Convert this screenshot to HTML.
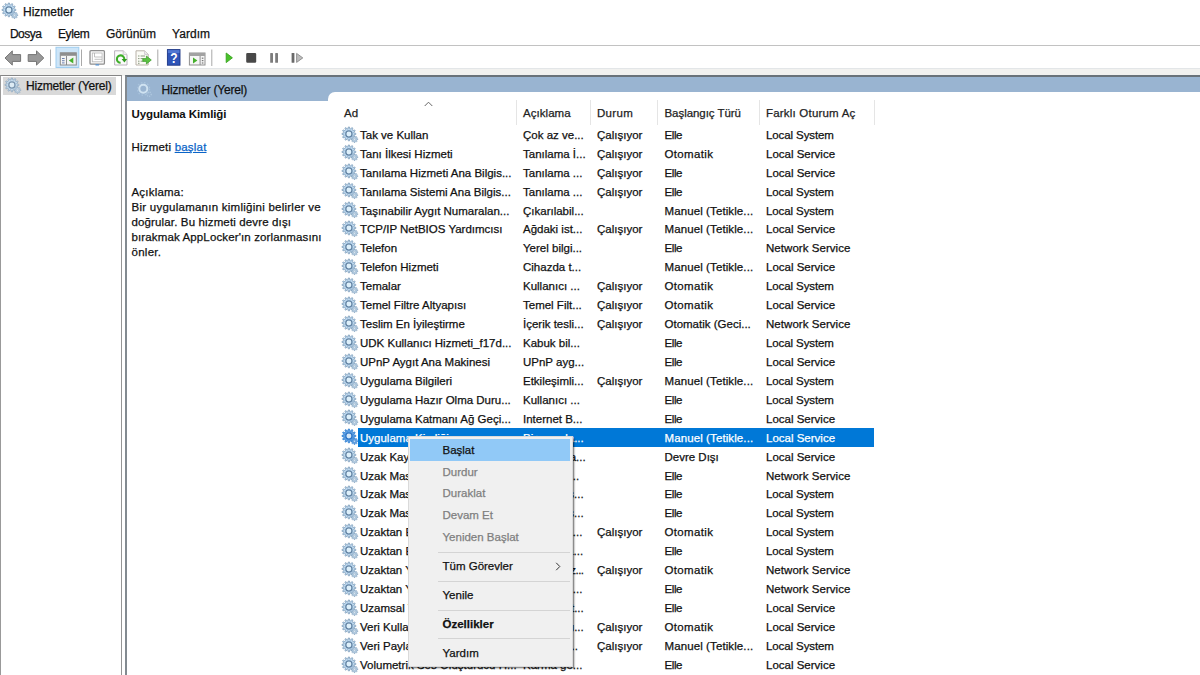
<!DOCTYPE html>
<html lang="tr"><head><meta charset="utf-8"><title>Hizmetler</title>
<style>
*{box-sizing:border-box;margin:0;padding:0}
html,body{width:1200px;height:675px;overflow:hidden;background:#fff}
body{position:relative;font-family:"Liberation Sans",Arial,sans-serif;font-size:11.5px;color:#111;letter-spacing:0;line-height:14px;-webkit-text-stroke:0.25px}
.a{position:absolute;white-space:nowrap}
.gear{position:absolute;overflow:visible}
.t{position:absolute;white-space:nowrap;height:14px;line-height:14px}
.sel{color:#fff}
.hd{color:#222}
.mi{position:absolute;left:442.5px;white-space:nowrap;height:14px;line-height:14px;font-size:11.5px;color:#111}
.dis{color:#7f7f7f}
.sep{position:absolute;left:438px;width:132px;height:1px;background:#d4d4d4}
.tsep{position:absolute;top:49px;width:1px;height:17px;background:#a8a8a8}
</style></head><body>

<svg class="gear" style="left:1.2px;top:2.90px;" width="18" height="17" viewBox="0 0 18 17"><path d="M7.1,1.7 7.3,-0.0 8.5,-0.0 8.7,1.7 9.8,2.0 10.8,0.6 11.9,1.2 11.2,2.8 12.0,3.6 13.6,2.9 14.2,4.0 12.8,5.0 13.1,6.1 14.8,6.3 14.8,7.5 13.1,7.7 12.8,8.8 14.2,9.8 13.6,10.9 12.0,10.2 11.2,11.0 11.9,12.6 10.8,13.2 9.8,11.8 8.7,12.1 8.5,13.8 7.3,13.8 7.1,12.1 6.0,11.8 5.0,13.2 3.9,12.6 4.6,11.0 3.8,10.2 2.2,10.9 1.6,9.8 3.0,8.8 2.7,7.7 1.0,7.5 1.0,6.3 2.7,6.1 3.0,5.0 1.6,4.0 2.2,2.9 3.8,3.6 4.6,2.8 3.9,1.2 5.0,0.6 6.0,2.0Z" fill="#bdd9f0" stroke="#829fbb" stroke-width="0.8" stroke-linejoin="round"/><circle cx="7.9" cy="6.9" r="3.1" fill="#def0fb" stroke="#6283a3" stroke-width="1.25"/><path d="M13.0,10.0 13.1,8.9 13.9,8.9 14.0,10.0 14.7,10.2 15.5,9.6 16.1,10.2 15.5,11.0 15.7,11.7 16.8,11.8 16.8,12.6 15.7,12.7 15.5,13.4 16.1,14.2 15.5,14.8 14.7,14.2 14.0,14.4 13.9,15.5 13.1,15.5 13.0,14.4 12.3,14.2 11.5,14.8 10.9,14.2 11.5,13.4 11.3,12.7 10.2,12.6 10.2,11.8 11.3,11.7 11.5,11.0 10.9,10.2 11.5,9.6 12.3,10.2Z" fill="#c3d9ec" stroke="#809fbb" stroke-width="0.7" stroke-linejoin="round"/><circle cx="13.5" cy="12.2" r="1" fill="#f0f7fc" stroke="#809fbb" stroke-width="0.5"/></svg>
<div class="t" style="left:23px;top:5px;font-size:12px">Hizmetler</div>
<div class="t" style="left:10px;top:27px;font-size:12px;letter-spacing:-0.55px">Dosya</div>
<div class="t" style="left:58px;top:27px;font-size:12px;letter-spacing:-0.4px">Eylem</div>
<div class="t" style="left:106px;top:27px;font-size:12px;letter-spacing:0px">Görünüm</div>
<div class="t" style="left:172px;top:27px;font-size:12px;letter-spacing:0.05px">Yardım</div>
<div class="a" style="left:0;top:44.7px;width:1200px;height:1px;background:#c2c2c2"></div>
<div class="a" style="left:0;top:67.5px;width:1200px;height:8px;background:#f1f1ef"></div>
<div class="a" style="left:0;top:67.5px;width:1200px;height:1px;background:#e3e6e8"></div>

<svg class="a" style="left:0;top:46px" width="320" height="22" viewBox="0 46 320 22">
 <!-- back / forward -->
 <path d="M5,58 L12.3,50.9 V54.6 H20.6 V61.4 H12.3 V65.1 Z" fill="#999999" stroke="#757575" stroke-width="1" stroke-linejoin="round"/>
 <path d="M43.8,58 L36.5,50.9 V54.6 H28.2 V61.4 H36.5 V65.1 Z" fill="#999999" stroke="#757575" stroke-width="1" stroke-linejoin="round"/>
 <rect x="50" y="49.5" width="1" height="16.5" fill="#a9a9a9"/>
 <!-- selected button -->
 <rect x="56" y="47.3" width="22.8" height="20.2" fill="#cde5f8" stroke="#9fcdf0" stroke-width="1"/>
 <rect x="60.3" y="52.8" width="16" height="12.2" fill="#f4f4f4" stroke="#8b8b8b" stroke-width="1"/>
 <rect x="60.3" y="52.8" width="16" height="3" fill="#8e8e8e"/>
 <rect x="66" y="56" width="1" height="9" fill="#8b8b8b"/>
 <rect x="62" y="58" width="2.6" height="1" fill="#6b7fb0"/><rect x="62" y="60.2" width="2.6" height="1" fill="#6b7fb0"/><rect x="62" y="62.4" width="2.6" height="1" fill="#6b7fb0"/>
 <path d="M73.3,57.6 V63.6 L68.8,60.6 Z" fill="#46b02c"/>
 <rect x="81" y="49.5" width="1" height="16.5" fill="#a9a9a9"/>
 <!-- icon 2 -->
 <rect x="90" y="50.6" width="14.4" height="13.6" rx="1" fill="#fafafa" stroke="#8e8e8e" stroke-width="1.3"/>
 <rect x="92.3" y="53" width="9.8" height="8.8" fill="#fff" stroke="#b5b5b5" stroke-width="0.8"/>
 <path d="M94.5,53 V57 H102 M94.5,59.3 H102" stroke="#b0b0b0" stroke-width="0.8" fill="none"/>
 <rect x="95.5" y="64.3" width="3.6" height="1.2" fill="#4d8fd6"/>
 <!-- icon 3 refresh -->
 <path d="M114.6,50.8 H123.2 L127,54.6 V65 H114.6 Z" fill="#fbfbfb" stroke="#b9b2bd" stroke-width="1" stroke-linejoin="round"/>
 <path d="M123.2,50.8 V54.6 H127" fill="#eee" stroke="#c5bfc8" stroke-width="0.8"/>
 <path d="M124.3,59 A3.7,3.7 0 1 0 120.6,62.8" fill="none" stroke="#3fae2a" stroke-width="2.1"/>
 <path d="M121.6,59 H127.2 L124.4,62.6 Z" fill="#2f9a1e"/>
 <!-- icon 4 export -->
 <path d="M136,50.8 H144.6 L148.2,54.4 V65 H136 Z" fill="#fbfbf6" stroke="#b9b2a8" stroke-width="1" stroke-linejoin="round"/>
 <path d="M144.6,50.8 V54.4 H148.2" fill="#eee" stroke="#c9c0cc" stroke-width="0.8"/>
 <path d="M138,56 H139.5 M140.6,56 H145 M138,58.6 H139.5 M140.6,58.6 H143 M138,61.2 H139.5 M140.6,61.2 H143 M138,63.3 H139.5" stroke="#8a9a80" stroke-width="1"/>
 <path d="M142.8,58.6 H146.4 V56 L151.3,60 L146.4,64 V61.4 H142.8 Z" fill="#5cc243" stroke="#3a9a26" stroke-width="0.7" stroke-linejoin="round"/>
 <rect x="157.3" y="49.5" width="1" height="16.5" fill="#a9a9a9"/>
 <!-- help -->
 <rect x="167.4" y="49.6" width="12.6" height="15.6" fill="#2f55b8" stroke="#1c3585" stroke-width="0.9"/>
 <path d="M167.9,50.1 H179.5 V53 H167.9Z" fill="#5f86dd" opacity=".7"/>
 <text transform="translate(173.8,63.2) scale(0.8,1)" font-family="Liberation Sans, Arial, sans-serif" font-size="15" font-weight="bold" fill="#ffffff" text-anchor="middle">?</text>
 <!-- window play -->
 <rect x="189.4" y="53" width="15.6" height="12" fill="#f6f6f6" stroke="#909090" stroke-width="1"/>
 <rect x="189.4" y="53" width="15.6" height="3" fill="#a2a2a2"/>
 <rect x="199.6" y="56" width="1" height="9" fill="#909090"/>
 <path d="M193,57.4 V63.4 L197.4,60.4 Z" fill="#46b02c"/>
 <rect x="201.8" y="57.6" width="1.6" height="1.2" fill="#777"/><rect x="201.8" y="60" width="1.6" height="1.2" fill="#777"/><rect x="201.8" y="62.4" width="1.6" height="1.2" fill="#777"/>
 <rect x="211.3" y="49.5" width="1" height="16.5" fill="#a9a9a9"/>
 <!-- play stop pause restart -->
 <path d="M226.2,53 L232.4,57.8 L226.2,62.6 Z" fill="#49c22a" stroke="#37a41d" stroke-width="0.9" stroke-linejoin="round"/>
 <rect x="246.2" y="52.9" width="10" height="9.8" rx="1.2" fill="#484848"/>
 <rect x="270.2" y="53" width="2.8" height="9.8" rx=".6" fill="#7c7c7c"/><rect x="275.2" y="53" width="2.8" height="9.8" rx=".6" fill="#7c7c7c"/>
 <rect x="291.6" y="53" width="2.8" height="9.8" rx=".6" fill="#6a6a6a"/>
 <path d="M296.6,53.4 L302.8,57.9 L296.6,62.4 Z" fill="#bdbdbd" stroke="#8a8a8a" stroke-width="0.9" stroke-linejoin="round"/>
</svg>

<div class="a" style="left:0;top:74.7px;width:122px;height:601px;border:1px solid #959595;border-top:1.4px solid #858585;border-bottom:0;border-left:1px solid #999;background:#fff"></div>
<div class="a" style="left:3px;top:77px;width:113px;height:18px;background:#d9d9d9"></div>
<svg class="gear" style="left:4px;top:77.50px;opacity:.8" width="18" height="17" viewBox="0 0 18 17"><path d="M7.1,1.7 7.3,-0.0 8.5,-0.0 8.7,1.7 9.8,2.0 10.8,0.6 11.9,1.2 11.2,2.8 12.0,3.6 13.6,2.9 14.2,4.0 12.8,5.0 13.1,6.1 14.8,6.3 14.8,7.5 13.1,7.7 12.8,8.8 14.2,9.8 13.6,10.9 12.0,10.2 11.2,11.0 11.9,12.6 10.8,13.2 9.8,11.8 8.7,12.1 8.5,13.8 7.3,13.8 7.1,12.1 6.0,11.8 5.0,13.2 3.9,12.6 4.6,11.0 3.8,10.2 2.2,10.9 1.6,9.8 3.0,8.8 2.7,7.7 1.0,7.5 1.0,6.3 2.7,6.1 3.0,5.0 1.6,4.0 2.2,2.9 3.8,3.6 4.6,2.8 3.9,1.2 5.0,0.6 6.0,2.0Z" fill="#bdd9f0" stroke="#829fbb" stroke-width="0.8" stroke-linejoin="round"/><circle cx="7.9" cy="6.9" r="3.1" fill="#def0fb" stroke="#6283a3" stroke-width="1.25"/><path d="M13.0,10.0 13.1,8.9 13.9,8.9 14.0,10.0 14.7,10.2 15.5,9.6 16.1,10.2 15.5,11.0 15.7,11.7 16.8,11.8 16.8,12.6 15.7,12.7 15.5,13.4 16.1,14.2 15.5,14.8 14.7,14.2 14.0,14.4 13.9,15.5 13.1,15.5 13.0,14.4 12.3,14.2 11.5,14.8 10.9,14.2 11.5,13.4 11.3,12.7 10.2,12.6 10.2,11.8 11.3,11.7 11.5,11.0 10.9,10.2 11.5,9.6 12.3,10.2Z" fill="#c3d9ec" stroke="#809fbb" stroke-width="0.7" stroke-linejoin="round"/><circle cx="13.5" cy="12.2" r="1" fill="#f0f7fc" stroke="#809fbb" stroke-width="0.5"/></svg>
<div class="t" style="left:26px;top:78.5px;font-size:12px;letter-spacing:-0.2px">Hizmetler (Yerel)</div>
<div class="a" style="left:125px;top:74.8px;width:1080px;height:601px;border-left:2px solid #838a90;border-top:2.2px solid #69727a;background:#fff"></div>
<div class="a" style="left:127px;top:77px;width:1074px;height:23.5px;background:#99b4d1"></div>
<div class="a" style="left:328px;top:91.8px;width:880px;height:12px;background:#fff;border-top-left-radius:7px"></div>
<svg class="a" style="left:137px;top:82px" width="16" height="16" viewBox="0 0 16 16"><circle cx="6.3" cy="6.8" r="4" fill="none" stroke="#cfe2f1" stroke-width="2"/><circle cx="6.3" cy="6.8" r="6.3" fill="none" stroke="#a9c3dc" stroke-width="1.2" stroke-dasharray="1.6 1.7"/><circle cx="12" cy="12.2" r="2.2" fill="none" stroke="#b4cce2" stroke-width="1.1" stroke-dasharray="1 1"/></svg>
<div class="t" style="left:161.5px;top:83.2px;font-size:12px;letter-spacing:-0.2px">Hizmetler (Yerel)</div>
<div class="t" style="left:131.5px;top:106.8px;font-weight:bold;font-size:11.5px;letter-spacing:-0.1px;-webkit-text-stroke:0">Uygulama Kimliği</div>
<div class="t" style="left:131.5px;top:140px;letter-spacing:0.2px">Hizmeti <span style="color:#0a64c8;text-decoration:underline">başlat</span></div>
<div class="t" style="left:131.5px;top:185px;letter-spacing:0.2px">Açıklama:</div>
<div class="t" style="left:131.5px;top:199.70px;letter-spacing:0.25px">Bir uygulamanın kimliğini belirler ve</div>
<div class="t" style="left:131.5px;top:214.65px;letter-spacing:0.14px">doğrular. Bu hizmeti devre dışı</div>
<div class="t" style="left:131.5px;top:229.60px;letter-spacing:0.13px">bırakmak AppLocker'ın zorlanmasını</div>
<div class="t" style="left:131.5px;top:244.55px;letter-spacing:0.27px">önler.</div>
<div class="t hd" style="left:344px;top:105.9px;letter-spacing:0px">Ad</div>
<div class="t hd" style="left:523px;top:105.9px;letter-spacing:0.05px">Açıklama</div>
<div class="t hd" style="left:597px;top:105.9px;letter-spacing:0.3px">Durum</div>
<div class="t hd" style="left:664.5px;top:105.9px;letter-spacing:-0.05px">Başlangıç Türü</div>
<div class="t hd" style="left:766px;top:105.9px;letter-spacing:0.2px">Farklı Oturum Aç</div>
<div class="a" style="left:516px;top:100px;width:1px;height:25px;background:#e5e5e5"></div>
<div class="a" style="left:590px;top:100px;width:1px;height:25px;background:#e5e5e5"></div>
<div class="a" style="left:657px;top:100px;width:1px;height:25px;background:#e5e5e5"></div>
<div class="a" style="left:758.5px;top:100px;width:1px;height:25px;background:#e5e5e5"></div>
<div class="a" style="left:873.5px;top:100px;width:1px;height:25px;background:#e5e5e5"></div>
<svg class="a" style="left:423.5px;top:100.5px" width="9" height="6" viewBox="0 0 9 6"><path d="M0.7,5 L4.5,1.2 L8.3,5" fill="none" stroke="#666" stroke-width="1"/></svg>
<div class="a" style="left:358px;top:428.33px;width:516.3px;height:18.5px;background:#0078d7"></div>
<svg class="gear" style="left:340.5px;top:126.50px;" width="18" height="17" viewBox="0 0 18 17"><path d="M7.1,1.7 7.3,-0.0 8.5,-0.0 8.7,1.7 9.8,2.0 10.8,0.6 11.9,1.2 11.2,2.8 12.0,3.6 13.6,2.9 14.2,4.0 12.8,5.0 13.1,6.1 14.8,6.3 14.8,7.5 13.1,7.7 12.8,8.8 14.2,9.8 13.6,10.9 12.0,10.2 11.2,11.0 11.9,12.6 10.8,13.2 9.8,11.8 8.7,12.1 8.5,13.8 7.3,13.8 7.1,12.1 6.0,11.8 5.0,13.2 3.9,12.6 4.6,11.0 3.8,10.2 2.2,10.9 1.6,9.8 3.0,8.8 2.7,7.7 1.0,7.5 1.0,6.3 2.7,6.1 3.0,5.0 1.6,4.0 2.2,2.9 3.8,3.6 4.6,2.8 3.9,1.2 5.0,0.6 6.0,2.0Z" fill="#bdd9f0" stroke="#829fbb" stroke-width="0.8" stroke-linejoin="round"/><circle cx="7.9" cy="6.9" r="3.1" fill="#def0fb" stroke="#6283a3" stroke-width="1.25"/><path d="M13.0,10.0 13.1,8.9 13.9,8.9 14.0,10.0 14.7,10.2 15.5,9.6 16.1,10.2 15.5,11.0 15.7,11.7 16.8,11.8 16.8,12.6 15.7,12.7 15.5,13.4 16.1,14.2 15.5,14.8 14.7,14.2 14.0,14.4 13.9,15.5 13.1,15.5 13.0,14.4 12.3,14.2 11.5,14.8 10.9,14.2 11.5,13.4 11.3,12.7 10.2,12.6 10.2,11.8 11.3,11.7 11.5,11.0 10.9,10.2 11.5,9.6 12.3,10.2Z" fill="#c3d9ec" stroke="#809fbb" stroke-width="0.7" stroke-linejoin="round"/><circle cx="13.5" cy="12.2" r="1" fill="#f0f7fc" stroke="#809fbb" stroke-width="0.5"/></svg>
<div class="t" style="left:360px;top:127.80px">Tak ve Kullan</div>
<div class="t" style="left:523px;top:127.80px">Çok az ve...</div>
<div class="t" style="left:597px;top:127.80px">Çalışıyor</div>
<div class="t" style="left:664.5px;top:127.80px;letter-spacing:-0.4px">Elle</div>
<div class="t" style="left:766px;top:127.80px;letter-spacing:-0.1px">Local System</div>
<svg class="gear" style="left:340.5px;top:145.43px;" width="18" height="17" viewBox="0 0 18 17"><path d="M7.1,1.7 7.3,-0.0 8.5,-0.0 8.7,1.7 9.8,2.0 10.8,0.6 11.9,1.2 11.2,2.8 12.0,3.6 13.6,2.9 14.2,4.0 12.8,5.0 13.1,6.1 14.8,6.3 14.8,7.5 13.1,7.7 12.8,8.8 14.2,9.8 13.6,10.9 12.0,10.2 11.2,11.0 11.9,12.6 10.8,13.2 9.8,11.8 8.7,12.1 8.5,13.8 7.3,13.8 7.1,12.1 6.0,11.8 5.0,13.2 3.9,12.6 4.6,11.0 3.8,10.2 2.2,10.9 1.6,9.8 3.0,8.8 2.7,7.7 1.0,7.5 1.0,6.3 2.7,6.1 3.0,5.0 1.6,4.0 2.2,2.9 3.8,3.6 4.6,2.8 3.9,1.2 5.0,0.6 6.0,2.0Z" fill="#bdd9f0" stroke="#829fbb" stroke-width="0.8" stroke-linejoin="round"/><circle cx="7.9" cy="6.9" r="3.1" fill="#def0fb" stroke="#6283a3" stroke-width="1.25"/><path d="M13.0,10.0 13.1,8.9 13.9,8.9 14.0,10.0 14.7,10.2 15.5,9.6 16.1,10.2 15.5,11.0 15.7,11.7 16.8,11.8 16.8,12.6 15.7,12.7 15.5,13.4 16.1,14.2 15.5,14.8 14.7,14.2 14.0,14.4 13.9,15.5 13.1,15.5 13.0,14.4 12.3,14.2 11.5,14.8 10.9,14.2 11.5,13.4 11.3,12.7 10.2,12.6 10.2,11.8 11.3,11.7 11.5,11.0 10.9,10.2 11.5,9.6 12.3,10.2Z" fill="#c3d9ec" stroke="#809fbb" stroke-width="0.7" stroke-linejoin="round"/><circle cx="13.5" cy="12.2" r="1" fill="#f0f7fc" stroke="#809fbb" stroke-width="0.5"/></svg>
<div class="t" style="left:360px;top:146.73px">Tanı İlkesi Hizmeti</div>
<div class="t" style="left:523px;top:146.73px">Tanılama İ...</div>
<div class="t" style="left:597px;top:146.73px">Çalışıyor</div>
<div class="t" style="left:664.5px;top:146.73px;letter-spacing:0.35px">Otomatik</div>
<div class="t" style="left:766px;top:146.73px">Local Service</div>
<svg class="gear" style="left:340.5px;top:164.36px;" width="18" height="17" viewBox="0 0 18 17"><path d="M7.1,1.7 7.3,-0.0 8.5,-0.0 8.7,1.7 9.8,2.0 10.8,0.6 11.9,1.2 11.2,2.8 12.0,3.6 13.6,2.9 14.2,4.0 12.8,5.0 13.1,6.1 14.8,6.3 14.8,7.5 13.1,7.7 12.8,8.8 14.2,9.8 13.6,10.9 12.0,10.2 11.2,11.0 11.9,12.6 10.8,13.2 9.8,11.8 8.7,12.1 8.5,13.8 7.3,13.8 7.1,12.1 6.0,11.8 5.0,13.2 3.9,12.6 4.6,11.0 3.8,10.2 2.2,10.9 1.6,9.8 3.0,8.8 2.7,7.7 1.0,7.5 1.0,6.3 2.7,6.1 3.0,5.0 1.6,4.0 2.2,2.9 3.8,3.6 4.6,2.8 3.9,1.2 5.0,0.6 6.0,2.0Z" fill="#bdd9f0" stroke="#829fbb" stroke-width="0.8" stroke-linejoin="round"/><circle cx="7.9" cy="6.9" r="3.1" fill="#def0fb" stroke="#6283a3" stroke-width="1.25"/><path d="M13.0,10.0 13.1,8.9 13.9,8.9 14.0,10.0 14.7,10.2 15.5,9.6 16.1,10.2 15.5,11.0 15.7,11.7 16.8,11.8 16.8,12.6 15.7,12.7 15.5,13.4 16.1,14.2 15.5,14.8 14.7,14.2 14.0,14.4 13.9,15.5 13.1,15.5 13.0,14.4 12.3,14.2 11.5,14.8 10.9,14.2 11.5,13.4 11.3,12.7 10.2,12.6 10.2,11.8 11.3,11.7 11.5,11.0 10.9,10.2 11.5,9.6 12.3,10.2Z" fill="#c3d9ec" stroke="#809fbb" stroke-width="0.7" stroke-linejoin="round"/><circle cx="13.5" cy="12.2" r="1" fill="#f0f7fc" stroke="#809fbb" stroke-width="0.5"/></svg>
<div class="t" style="left:360px;top:165.66px">Tanılama Hizmeti Ana Bilgis...</div>
<div class="t" style="left:523px;top:165.66px">Tanılama ...</div>
<div class="t" style="left:597px;top:165.66px">Çalışıyor</div>
<div class="t" style="left:664.5px;top:165.66px;letter-spacing:-0.4px">Elle</div>
<div class="t" style="left:766px;top:165.66px">Local Service</div>
<svg class="gear" style="left:340.5px;top:183.29px;" width="18" height="17" viewBox="0 0 18 17"><path d="M7.1,1.7 7.3,-0.0 8.5,-0.0 8.7,1.7 9.8,2.0 10.8,0.6 11.9,1.2 11.2,2.8 12.0,3.6 13.6,2.9 14.2,4.0 12.8,5.0 13.1,6.1 14.8,6.3 14.8,7.5 13.1,7.7 12.8,8.8 14.2,9.8 13.6,10.9 12.0,10.2 11.2,11.0 11.9,12.6 10.8,13.2 9.8,11.8 8.7,12.1 8.5,13.8 7.3,13.8 7.1,12.1 6.0,11.8 5.0,13.2 3.9,12.6 4.6,11.0 3.8,10.2 2.2,10.9 1.6,9.8 3.0,8.8 2.7,7.7 1.0,7.5 1.0,6.3 2.7,6.1 3.0,5.0 1.6,4.0 2.2,2.9 3.8,3.6 4.6,2.8 3.9,1.2 5.0,0.6 6.0,2.0Z" fill="#bdd9f0" stroke="#829fbb" stroke-width="0.8" stroke-linejoin="round"/><circle cx="7.9" cy="6.9" r="3.1" fill="#def0fb" stroke="#6283a3" stroke-width="1.25"/><path d="M13.0,10.0 13.1,8.9 13.9,8.9 14.0,10.0 14.7,10.2 15.5,9.6 16.1,10.2 15.5,11.0 15.7,11.7 16.8,11.8 16.8,12.6 15.7,12.7 15.5,13.4 16.1,14.2 15.5,14.8 14.7,14.2 14.0,14.4 13.9,15.5 13.1,15.5 13.0,14.4 12.3,14.2 11.5,14.8 10.9,14.2 11.5,13.4 11.3,12.7 10.2,12.6 10.2,11.8 11.3,11.7 11.5,11.0 10.9,10.2 11.5,9.6 12.3,10.2Z" fill="#c3d9ec" stroke="#809fbb" stroke-width="0.7" stroke-linejoin="round"/><circle cx="13.5" cy="12.2" r="1" fill="#f0f7fc" stroke="#809fbb" stroke-width="0.5"/></svg>
<div class="t" style="left:360px;top:184.59px">Tanılama Sistemi Ana Bilgis...</div>
<div class="t" style="left:523px;top:184.59px">Tanılama ...</div>
<div class="t" style="left:597px;top:184.59px">Çalışıyor</div>
<div class="t" style="left:664.5px;top:184.59px;letter-spacing:-0.4px">Elle</div>
<div class="t" style="left:766px;top:184.59px;letter-spacing:-0.1px">Local System</div>
<svg class="gear" style="left:340.5px;top:202.22px;" width="18" height="17" viewBox="0 0 18 17"><path d="M7.1,1.7 7.3,-0.0 8.5,-0.0 8.7,1.7 9.8,2.0 10.8,0.6 11.9,1.2 11.2,2.8 12.0,3.6 13.6,2.9 14.2,4.0 12.8,5.0 13.1,6.1 14.8,6.3 14.8,7.5 13.1,7.7 12.8,8.8 14.2,9.8 13.6,10.9 12.0,10.2 11.2,11.0 11.9,12.6 10.8,13.2 9.8,11.8 8.7,12.1 8.5,13.8 7.3,13.8 7.1,12.1 6.0,11.8 5.0,13.2 3.9,12.6 4.6,11.0 3.8,10.2 2.2,10.9 1.6,9.8 3.0,8.8 2.7,7.7 1.0,7.5 1.0,6.3 2.7,6.1 3.0,5.0 1.6,4.0 2.2,2.9 3.8,3.6 4.6,2.8 3.9,1.2 5.0,0.6 6.0,2.0Z" fill="#bdd9f0" stroke="#829fbb" stroke-width="0.8" stroke-linejoin="round"/><circle cx="7.9" cy="6.9" r="3.1" fill="#def0fb" stroke="#6283a3" stroke-width="1.25"/><path d="M13.0,10.0 13.1,8.9 13.9,8.9 14.0,10.0 14.7,10.2 15.5,9.6 16.1,10.2 15.5,11.0 15.7,11.7 16.8,11.8 16.8,12.6 15.7,12.7 15.5,13.4 16.1,14.2 15.5,14.8 14.7,14.2 14.0,14.4 13.9,15.5 13.1,15.5 13.0,14.4 12.3,14.2 11.5,14.8 10.9,14.2 11.5,13.4 11.3,12.7 10.2,12.6 10.2,11.8 11.3,11.7 11.5,11.0 10.9,10.2 11.5,9.6 12.3,10.2Z" fill="#c3d9ec" stroke="#809fbb" stroke-width="0.7" stroke-linejoin="round"/><circle cx="13.5" cy="12.2" r="1" fill="#f0f7fc" stroke="#809fbb" stroke-width="0.5"/></svg>
<div class="t" style="left:360px;top:203.52px">Taşınabilir Aygıt Numaralan...</div>
<div class="t" style="left:523px;top:203.52px">Çıkarılabil...</div>
<div class="t" style="left:664.5px;top:203.52px;letter-spacing:0.1px">Manuel (Tetikle...</div>
<div class="t" style="left:766px;top:203.52px;letter-spacing:-0.1px">Local System</div>
<svg class="gear" style="left:340.5px;top:221.15px;" width="18" height="17" viewBox="0 0 18 17"><path d="M7.1,1.7 7.3,-0.0 8.5,-0.0 8.7,1.7 9.8,2.0 10.8,0.6 11.9,1.2 11.2,2.8 12.0,3.6 13.6,2.9 14.2,4.0 12.8,5.0 13.1,6.1 14.8,6.3 14.8,7.5 13.1,7.7 12.8,8.8 14.2,9.8 13.6,10.9 12.0,10.2 11.2,11.0 11.9,12.6 10.8,13.2 9.8,11.8 8.7,12.1 8.5,13.8 7.3,13.8 7.1,12.1 6.0,11.8 5.0,13.2 3.9,12.6 4.6,11.0 3.8,10.2 2.2,10.9 1.6,9.8 3.0,8.8 2.7,7.7 1.0,7.5 1.0,6.3 2.7,6.1 3.0,5.0 1.6,4.0 2.2,2.9 3.8,3.6 4.6,2.8 3.9,1.2 5.0,0.6 6.0,2.0Z" fill="#bdd9f0" stroke="#829fbb" stroke-width="0.8" stroke-linejoin="round"/><circle cx="7.9" cy="6.9" r="3.1" fill="#def0fb" stroke="#6283a3" stroke-width="1.25"/><path d="M13.0,10.0 13.1,8.9 13.9,8.9 14.0,10.0 14.7,10.2 15.5,9.6 16.1,10.2 15.5,11.0 15.7,11.7 16.8,11.8 16.8,12.6 15.7,12.7 15.5,13.4 16.1,14.2 15.5,14.8 14.7,14.2 14.0,14.4 13.9,15.5 13.1,15.5 13.0,14.4 12.3,14.2 11.5,14.8 10.9,14.2 11.5,13.4 11.3,12.7 10.2,12.6 10.2,11.8 11.3,11.7 11.5,11.0 10.9,10.2 11.5,9.6 12.3,10.2Z" fill="#c3d9ec" stroke="#809fbb" stroke-width="0.7" stroke-linejoin="round"/><circle cx="13.5" cy="12.2" r="1" fill="#f0f7fc" stroke="#809fbb" stroke-width="0.5"/></svg>
<div class="t" style="left:360px;top:222.45px">TCP/IP NetBIOS Yardımcısı</div>
<div class="t" style="left:523px;top:222.45px">Ağdaki ist...</div>
<div class="t" style="left:597px;top:222.45px">Çalışıyor</div>
<div class="t" style="left:664.5px;top:222.45px;letter-spacing:0.1px">Manuel (Tetikle...</div>
<div class="t" style="left:766px;top:222.45px">Local Service</div>
<svg class="gear" style="left:340.5px;top:240.08px;" width="18" height="17" viewBox="0 0 18 17"><path d="M7.1,1.7 7.3,-0.0 8.5,-0.0 8.7,1.7 9.8,2.0 10.8,0.6 11.9,1.2 11.2,2.8 12.0,3.6 13.6,2.9 14.2,4.0 12.8,5.0 13.1,6.1 14.8,6.3 14.8,7.5 13.1,7.7 12.8,8.8 14.2,9.8 13.6,10.9 12.0,10.2 11.2,11.0 11.9,12.6 10.8,13.2 9.8,11.8 8.7,12.1 8.5,13.8 7.3,13.8 7.1,12.1 6.0,11.8 5.0,13.2 3.9,12.6 4.6,11.0 3.8,10.2 2.2,10.9 1.6,9.8 3.0,8.8 2.7,7.7 1.0,7.5 1.0,6.3 2.7,6.1 3.0,5.0 1.6,4.0 2.2,2.9 3.8,3.6 4.6,2.8 3.9,1.2 5.0,0.6 6.0,2.0Z" fill="#bdd9f0" stroke="#829fbb" stroke-width="0.8" stroke-linejoin="round"/><circle cx="7.9" cy="6.9" r="3.1" fill="#def0fb" stroke="#6283a3" stroke-width="1.25"/><path d="M13.0,10.0 13.1,8.9 13.9,8.9 14.0,10.0 14.7,10.2 15.5,9.6 16.1,10.2 15.5,11.0 15.7,11.7 16.8,11.8 16.8,12.6 15.7,12.7 15.5,13.4 16.1,14.2 15.5,14.8 14.7,14.2 14.0,14.4 13.9,15.5 13.1,15.5 13.0,14.4 12.3,14.2 11.5,14.8 10.9,14.2 11.5,13.4 11.3,12.7 10.2,12.6 10.2,11.8 11.3,11.7 11.5,11.0 10.9,10.2 11.5,9.6 12.3,10.2Z" fill="#c3d9ec" stroke="#809fbb" stroke-width="0.7" stroke-linejoin="round"/><circle cx="13.5" cy="12.2" r="1" fill="#f0f7fc" stroke="#809fbb" stroke-width="0.5"/></svg>
<div class="t" style="left:360px;top:241.38px">Telefon</div>
<div class="t" style="left:523px;top:241.38px">Yerel bilgi...</div>
<div class="t" style="left:664.5px;top:241.38px;letter-spacing:-0.4px">Elle</div>
<div class="t" style="left:766px;top:241.38px;letter-spacing:0.05px">Network Service</div>
<svg class="gear" style="left:340.5px;top:259.01px;" width="18" height="17" viewBox="0 0 18 17"><path d="M7.1,1.7 7.3,-0.0 8.5,-0.0 8.7,1.7 9.8,2.0 10.8,0.6 11.9,1.2 11.2,2.8 12.0,3.6 13.6,2.9 14.2,4.0 12.8,5.0 13.1,6.1 14.8,6.3 14.8,7.5 13.1,7.7 12.8,8.8 14.2,9.8 13.6,10.9 12.0,10.2 11.2,11.0 11.9,12.6 10.8,13.2 9.8,11.8 8.7,12.1 8.5,13.8 7.3,13.8 7.1,12.1 6.0,11.8 5.0,13.2 3.9,12.6 4.6,11.0 3.8,10.2 2.2,10.9 1.6,9.8 3.0,8.8 2.7,7.7 1.0,7.5 1.0,6.3 2.7,6.1 3.0,5.0 1.6,4.0 2.2,2.9 3.8,3.6 4.6,2.8 3.9,1.2 5.0,0.6 6.0,2.0Z" fill="#bdd9f0" stroke="#829fbb" stroke-width="0.8" stroke-linejoin="round"/><circle cx="7.9" cy="6.9" r="3.1" fill="#def0fb" stroke="#6283a3" stroke-width="1.25"/><path d="M13.0,10.0 13.1,8.9 13.9,8.9 14.0,10.0 14.7,10.2 15.5,9.6 16.1,10.2 15.5,11.0 15.7,11.7 16.8,11.8 16.8,12.6 15.7,12.7 15.5,13.4 16.1,14.2 15.5,14.8 14.7,14.2 14.0,14.4 13.9,15.5 13.1,15.5 13.0,14.4 12.3,14.2 11.5,14.8 10.9,14.2 11.5,13.4 11.3,12.7 10.2,12.6 10.2,11.8 11.3,11.7 11.5,11.0 10.9,10.2 11.5,9.6 12.3,10.2Z" fill="#c3d9ec" stroke="#809fbb" stroke-width="0.7" stroke-linejoin="round"/><circle cx="13.5" cy="12.2" r="1" fill="#f0f7fc" stroke="#809fbb" stroke-width="0.5"/></svg>
<div class="t" style="left:360px;top:260.31px">Telefon Hizmeti</div>
<div class="t" style="left:523px;top:260.31px">Cihazda t...</div>
<div class="t" style="left:664.5px;top:260.31px;letter-spacing:0.1px">Manuel (Tetikle...</div>
<div class="t" style="left:766px;top:260.31px">Local Service</div>
<svg class="gear" style="left:340.5px;top:277.94px;" width="18" height="17" viewBox="0 0 18 17"><path d="M7.1,1.7 7.3,-0.0 8.5,-0.0 8.7,1.7 9.8,2.0 10.8,0.6 11.9,1.2 11.2,2.8 12.0,3.6 13.6,2.9 14.2,4.0 12.8,5.0 13.1,6.1 14.8,6.3 14.8,7.5 13.1,7.7 12.8,8.8 14.2,9.8 13.6,10.9 12.0,10.2 11.2,11.0 11.9,12.6 10.8,13.2 9.8,11.8 8.7,12.1 8.5,13.8 7.3,13.8 7.1,12.1 6.0,11.8 5.0,13.2 3.9,12.6 4.6,11.0 3.8,10.2 2.2,10.9 1.6,9.8 3.0,8.8 2.7,7.7 1.0,7.5 1.0,6.3 2.7,6.1 3.0,5.0 1.6,4.0 2.2,2.9 3.8,3.6 4.6,2.8 3.9,1.2 5.0,0.6 6.0,2.0Z" fill="#bdd9f0" stroke="#829fbb" stroke-width="0.8" stroke-linejoin="round"/><circle cx="7.9" cy="6.9" r="3.1" fill="#def0fb" stroke="#6283a3" stroke-width="1.25"/><path d="M13.0,10.0 13.1,8.9 13.9,8.9 14.0,10.0 14.7,10.2 15.5,9.6 16.1,10.2 15.5,11.0 15.7,11.7 16.8,11.8 16.8,12.6 15.7,12.7 15.5,13.4 16.1,14.2 15.5,14.8 14.7,14.2 14.0,14.4 13.9,15.5 13.1,15.5 13.0,14.4 12.3,14.2 11.5,14.8 10.9,14.2 11.5,13.4 11.3,12.7 10.2,12.6 10.2,11.8 11.3,11.7 11.5,11.0 10.9,10.2 11.5,9.6 12.3,10.2Z" fill="#c3d9ec" stroke="#809fbb" stroke-width="0.7" stroke-linejoin="round"/><circle cx="13.5" cy="12.2" r="1" fill="#f0f7fc" stroke="#809fbb" stroke-width="0.5"/></svg>
<div class="t" style="left:360px;top:279.24px">Temalar</div>
<div class="t" style="left:523px;top:279.24px">Kullanıcı ...</div>
<div class="t" style="left:597px;top:279.24px">Çalışıyor</div>
<div class="t" style="left:664.5px;top:279.24px;letter-spacing:0.35px">Otomatik</div>
<div class="t" style="left:766px;top:279.24px;letter-spacing:-0.1px">Local System</div>
<svg class="gear" style="left:340.5px;top:296.87px;" width="18" height="17" viewBox="0 0 18 17"><path d="M7.1,1.7 7.3,-0.0 8.5,-0.0 8.7,1.7 9.8,2.0 10.8,0.6 11.9,1.2 11.2,2.8 12.0,3.6 13.6,2.9 14.2,4.0 12.8,5.0 13.1,6.1 14.8,6.3 14.8,7.5 13.1,7.7 12.8,8.8 14.2,9.8 13.6,10.9 12.0,10.2 11.2,11.0 11.9,12.6 10.8,13.2 9.8,11.8 8.7,12.1 8.5,13.8 7.3,13.8 7.1,12.1 6.0,11.8 5.0,13.2 3.9,12.6 4.6,11.0 3.8,10.2 2.2,10.9 1.6,9.8 3.0,8.8 2.7,7.7 1.0,7.5 1.0,6.3 2.7,6.1 3.0,5.0 1.6,4.0 2.2,2.9 3.8,3.6 4.6,2.8 3.9,1.2 5.0,0.6 6.0,2.0Z" fill="#bdd9f0" stroke="#829fbb" stroke-width="0.8" stroke-linejoin="round"/><circle cx="7.9" cy="6.9" r="3.1" fill="#def0fb" stroke="#6283a3" stroke-width="1.25"/><path d="M13.0,10.0 13.1,8.9 13.9,8.9 14.0,10.0 14.7,10.2 15.5,9.6 16.1,10.2 15.5,11.0 15.7,11.7 16.8,11.8 16.8,12.6 15.7,12.7 15.5,13.4 16.1,14.2 15.5,14.8 14.7,14.2 14.0,14.4 13.9,15.5 13.1,15.5 13.0,14.4 12.3,14.2 11.5,14.8 10.9,14.2 11.5,13.4 11.3,12.7 10.2,12.6 10.2,11.8 11.3,11.7 11.5,11.0 10.9,10.2 11.5,9.6 12.3,10.2Z" fill="#c3d9ec" stroke="#809fbb" stroke-width="0.7" stroke-linejoin="round"/><circle cx="13.5" cy="12.2" r="1" fill="#f0f7fc" stroke="#809fbb" stroke-width="0.5"/></svg>
<div class="t" style="left:360px;top:298.17px">Temel Filtre Altyapısı</div>
<div class="t" style="left:523px;top:298.17px">Temel Filt...</div>
<div class="t" style="left:597px;top:298.17px">Çalışıyor</div>
<div class="t" style="left:664.5px;top:298.17px;letter-spacing:0.35px">Otomatik</div>
<div class="t" style="left:766px;top:298.17px">Local Service</div>
<svg class="gear" style="left:340.5px;top:315.80px;" width="18" height="17" viewBox="0 0 18 17"><path d="M7.1,1.7 7.3,-0.0 8.5,-0.0 8.7,1.7 9.8,2.0 10.8,0.6 11.9,1.2 11.2,2.8 12.0,3.6 13.6,2.9 14.2,4.0 12.8,5.0 13.1,6.1 14.8,6.3 14.8,7.5 13.1,7.7 12.8,8.8 14.2,9.8 13.6,10.9 12.0,10.2 11.2,11.0 11.9,12.6 10.8,13.2 9.8,11.8 8.7,12.1 8.5,13.8 7.3,13.8 7.1,12.1 6.0,11.8 5.0,13.2 3.9,12.6 4.6,11.0 3.8,10.2 2.2,10.9 1.6,9.8 3.0,8.8 2.7,7.7 1.0,7.5 1.0,6.3 2.7,6.1 3.0,5.0 1.6,4.0 2.2,2.9 3.8,3.6 4.6,2.8 3.9,1.2 5.0,0.6 6.0,2.0Z" fill="#bdd9f0" stroke="#829fbb" stroke-width="0.8" stroke-linejoin="round"/><circle cx="7.9" cy="6.9" r="3.1" fill="#def0fb" stroke="#6283a3" stroke-width="1.25"/><path d="M13.0,10.0 13.1,8.9 13.9,8.9 14.0,10.0 14.7,10.2 15.5,9.6 16.1,10.2 15.5,11.0 15.7,11.7 16.8,11.8 16.8,12.6 15.7,12.7 15.5,13.4 16.1,14.2 15.5,14.8 14.7,14.2 14.0,14.4 13.9,15.5 13.1,15.5 13.0,14.4 12.3,14.2 11.5,14.8 10.9,14.2 11.5,13.4 11.3,12.7 10.2,12.6 10.2,11.8 11.3,11.7 11.5,11.0 10.9,10.2 11.5,9.6 12.3,10.2Z" fill="#c3d9ec" stroke="#809fbb" stroke-width="0.7" stroke-linejoin="round"/><circle cx="13.5" cy="12.2" r="1" fill="#f0f7fc" stroke="#809fbb" stroke-width="0.5"/></svg>
<div class="t" style="left:360px;top:317.10px">Teslim En İyileştirme</div>
<div class="t" style="left:523px;top:317.10px">İçerik tesli...</div>
<div class="t" style="left:597px;top:317.10px">Çalışıyor</div>
<div class="t" style="left:664.5px;top:317.10px">Otomatik (Geci...</div>
<div class="t" style="left:766px;top:317.10px;letter-spacing:0.05px">Network Service</div>
<svg class="gear" style="left:340.5px;top:334.73px;" width="18" height="17" viewBox="0 0 18 17"><path d="M7.1,1.7 7.3,-0.0 8.5,-0.0 8.7,1.7 9.8,2.0 10.8,0.6 11.9,1.2 11.2,2.8 12.0,3.6 13.6,2.9 14.2,4.0 12.8,5.0 13.1,6.1 14.8,6.3 14.8,7.5 13.1,7.7 12.8,8.8 14.2,9.8 13.6,10.9 12.0,10.2 11.2,11.0 11.9,12.6 10.8,13.2 9.8,11.8 8.7,12.1 8.5,13.8 7.3,13.8 7.1,12.1 6.0,11.8 5.0,13.2 3.9,12.6 4.6,11.0 3.8,10.2 2.2,10.9 1.6,9.8 3.0,8.8 2.7,7.7 1.0,7.5 1.0,6.3 2.7,6.1 3.0,5.0 1.6,4.0 2.2,2.9 3.8,3.6 4.6,2.8 3.9,1.2 5.0,0.6 6.0,2.0Z" fill="#bdd9f0" stroke="#829fbb" stroke-width="0.8" stroke-linejoin="round"/><circle cx="7.9" cy="6.9" r="3.1" fill="#def0fb" stroke="#6283a3" stroke-width="1.25"/><path d="M13.0,10.0 13.1,8.9 13.9,8.9 14.0,10.0 14.7,10.2 15.5,9.6 16.1,10.2 15.5,11.0 15.7,11.7 16.8,11.8 16.8,12.6 15.7,12.7 15.5,13.4 16.1,14.2 15.5,14.8 14.7,14.2 14.0,14.4 13.9,15.5 13.1,15.5 13.0,14.4 12.3,14.2 11.5,14.8 10.9,14.2 11.5,13.4 11.3,12.7 10.2,12.6 10.2,11.8 11.3,11.7 11.5,11.0 10.9,10.2 11.5,9.6 12.3,10.2Z" fill="#c3d9ec" stroke="#809fbb" stroke-width="0.7" stroke-linejoin="round"/><circle cx="13.5" cy="12.2" r="1" fill="#f0f7fc" stroke="#809fbb" stroke-width="0.5"/></svg>
<div class="t" style="left:360px;top:336.03px">UDK Kullanıcı Hizmeti_f17d...</div>
<div class="t" style="left:523px;top:336.03px">Kabuk bil...</div>
<div class="t" style="left:664.5px;top:336.03px;letter-spacing:-0.4px">Elle</div>
<div class="t" style="left:766px;top:336.03px;letter-spacing:-0.1px">Local System</div>
<svg class="gear" style="left:340.5px;top:353.66px;" width="18" height="17" viewBox="0 0 18 17"><path d="M7.1,1.7 7.3,-0.0 8.5,-0.0 8.7,1.7 9.8,2.0 10.8,0.6 11.9,1.2 11.2,2.8 12.0,3.6 13.6,2.9 14.2,4.0 12.8,5.0 13.1,6.1 14.8,6.3 14.8,7.5 13.1,7.7 12.8,8.8 14.2,9.8 13.6,10.9 12.0,10.2 11.2,11.0 11.9,12.6 10.8,13.2 9.8,11.8 8.7,12.1 8.5,13.8 7.3,13.8 7.1,12.1 6.0,11.8 5.0,13.2 3.9,12.6 4.6,11.0 3.8,10.2 2.2,10.9 1.6,9.8 3.0,8.8 2.7,7.7 1.0,7.5 1.0,6.3 2.7,6.1 3.0,5.0 1.6,4.0 2.2,2.9 3.8,3.6 4.6,2.8 3.9,1.2 5.0,0.6 6.0,2.0Z" fill="#bdd9f0" stroke="#829fbb" stroke-width="0.8" stroke-linejoin="round"/><circle cx="7.9" cy="6.9" r="3.1" fill="#def0fb" stroke="#6283a3" stroke-width="1.25"/><path d="M13.0,10.0 13.1,8.9 13.9,8.9 14.0,10.0 14.7,10.2 15.5,9.6 16.1,10.2 15.5,11.0 15.7,11.7 16.8,11.8 16.8,12.6 15.7,12.7 15.5,13.4 16.1,14.2 15.5,14.8 14.7,14.2 14.0,14.4 13.9,15.5 13.1,15.5 13.0,14.4 12.3,14.2 11.5,14.8 10.9,14.2 11.5,13.4 11.3,12.7 10.2,12.6 10.2,11.8 11.3,11.7 11.5,11.0 10.9,10.2 11.5,9.6 12.3,10.2Z" fill="#c3d9ec" stroke="#809fbb" stroke-width="0.7" stroke-linejoin="round"/><circle cx="13.5" cy="12.2" r="1" fill="#f0f7fc" stroke="#809fbb" stroke-width="0.5"/></svg>
<div class="t" style="left:360px;top:354.96px">UPnP Aygıt Ana Makinesi</div>
<div class="t" style="left:523px;top:354.96px">UPnP ayg...</div>
<div class="t" style="left:664.5px;top:354.96px;letter-spacing:-0.4px">Elle</div>
<div class="t" style="left:766px;top:354.96px">Local Service</div>
<svg class="gear" style="left:340.5px;top:372.59px;" width="18" height="17" viewBox="0 0 18 17"><path d="M7.1,1.7 7.3,-0.0 8.5,-0.0 8.7,1.7 9.8,2.0 10.8,0.6 11.9,1.2 11.2,2.8 12.0,3.6 13.6,2.9 14.2,4.0 12.8,5.0 13.1,6.1 14.8,6.3 14.8,7.5 13.1,7.7 12.8,8.8 14.2,9.8 13.6,10.9 12.0,10.2 11.2,11.0 11.9,12.6 10.8,13.2 9.8,11.8 8.7,12.1 8.5,13.8 7.3,13.8 7.1,12.1 6.0,11.8 5.0,13.2 3.9,12.6 4.6,11.0 3.8,10.2 2.2,10.9 1.6,9.8 3.0,8.8 2.7,7.7 1.0,7.5 1.0,6.3 2.7,6.1 3.0,5.0 1.6,4.0 2.2,2.9 3.8,3.6 4.6,2.8 3.9,1.2 5.0,0.6 6.0,2.0Z" fill="#bdd9f0" stroke="#829fbb" stroke-width="0.8" stroke-linejoin="round"/><circle cx="7.9" cy="6.9" r="3.1" fill="#def0fb" stroke="#6283a3" stroke-width="1.25"/><path d="M13.0,10.0 13.1,8.9 13.9,8.9 14.0,10.0 14.7,10.2 15.5,9.6 16.1,10.2 15.5,11.0 15.7,11.7 16.8,11.8 16.8,12.6 15.7,12.7 15.5,13.4 16.1,14.2 15.5,14.8 14.7,14.2 14.0,14.4 13.9,15.5 13.1,15.5 13.0,14.4 12.3,14.2 11.5,14.8 10.9,14.2 11.5,13.4 11.3,12.7 10.2,12.6 10.2,11.8 11.3,11.7 11.5,11.0 10.9,10.2 11.5,9.6 12.3,10.2Z" fill="#c3d9ec" stroke="#809fbb" stroke-width="0.7" stroke-linejoin="round"/><circle cx="13.5" cy="12.2" r="1" fill="#f0f7fc" stroke="#809fbb" stroke-width="0.5"/></svg>
<div class="t" style="left:360px;top:373.89px">Uygulama Bilgileri</div>
<div class="t" style="left:523px;top:373.89px">Etkileşimli...</div>
<div class="t" style="left:597px;top:373.89px">Çalışıyor</div>
<div class="t" style="left:664.5px;top:373.89px;letter-spacing:0.1px">Manuel (Tetikle...</div>
<div class="t" style="left:766px;top:373.89px;letter-spacing:-0.1px">Local System</div>
<svg class="gear" style="left:340.5px;top:391.52px;" width="18" height="17" viewBox="0 0 18 17"><path d="M7.1,1.7 7.3,-0.0 8.5,-0.0 8.7,1.7 9.8,2.0 10.8,0.6 11.9,1.2 11.2,2.8 12.0,3.6 13.6,2.9 14.2,4.0 12.8,5.0 13.1,6.1 14.8,6.3 14.8,7.5 13.1,7.7 12.8,8.8 14.2,9.8 13.6,10.9 12.0,10.2 11.2,11.0 11.9,12.6 10.8,13.2 9.8,11.8 8.7,12.1 8.5,13.8 7.3,13.8 7.1,12.1 6.0,11.8 5.0,13.2 3.9,12.6 4.6,11.0 3.8,10.2 2.2,10.9 1.6,9.8 3.0,8.8 2.7,7.7 1.0,7.5 1.0,6.3 2.7,6.1 3.0,5.0 1.6,4.0 2.2,2.9 3.8,3.6 4.6,2.8 3.9,1.2 5.0,0.6 6.0,2.0Z" fill="#bdd9f0" stroke="#829fbb" stroke-width="0.8" stroke-linejoin="round"/><circle cx="7.9" cy="6.9" r="3.1" fill="#def0fb" stroke="#6283a3" stroke-width="1.25"/><path d="M13.0,10.0 13.1,8.9 13.9,8.9 14.0,10.0 14.7,10.2 15.5,9.6 16.1,10.2 15.5,11.0 15.7,11.7 16.8,11.8 16.8,12.6 15.7,12.7 15.5,13.4 16.1,14.2 15.5,14.8 14.7,14.2 14.0,14.4 13.9,15.5 13.1,15.5 13.0,14.4 12.3,14.2 11.5,14.8 10.9,14.2 11.5,13.4 11.3,12.7 10.2,12.6 10.2,11.8 11.3,11.7 11.5,11.0 10.9,10.2 11.5,9.6 12.3,10.2Z" fill="#c3d9ec" stroke="#809fbb" stroke-width="0.7" stroke-linejoin="round"/><circle cx="13.5" cy="12.2" r="1" fill="#f0f7fc" stroke="#809fbb" stroke-width="0.5"/></svg>
<div class="t" style="left:360px;top:392.82px">Uygulama Hazır Olma Duru...</div>
<div class="t" style="left:523px;top:392.82px">Kullanıcı ...</div>
<div class="t" style="left:664.5px;top:392.82px;letter-spacing:-0.4px">Elle</div>
<div class="t" style="left:766px;top:392.82px;letter-spacing:-0.1px">Local System</div>
<svg class="gear" style="left:340.5px;top:410.45px;" width="18" height="17" viewBox="0 0 18 17"><path d="M7.1,1.7 7.3,-0.0 8.5,-0.0 8.7,1.7 9.8,2.0 10.8,0.6 11.9,1.2 11.2,2.8 12.0,3.6 13.6,2.9 14.2,4.0 12.8,5.0 13.1,6.1 14.8,6.3 14.8,7.5 13.1,7.7 12.8,8.8 14.2,9.8 13.6,10.9 12.0,10.2 11.2,11.0 11.9,12.6 10.8,13.2 9.8,11.8 8.7,12.1 8.5,13.8 7.3,13.8 7.1,12.1 6.0,11.8 5.0,13.2 3.9,12.6 4.6,11.0 3.8,10.2 2.2,10.9 1.6,9.8 3.0,8.8 2.7,7.7 1.0,7.5 1.0,6.3 2.7,6.1 3.0,5.0 1.6,4.0 2.2,2.9 3.8,3.6 4.6,2.8 3.9,1.2 5.0,0.6 6.0,2.0Z" fill="#bdd9f0" stroke="#829fbb" stroke-width="0.8" stroke-linejoin="round"/><circle cx="7.9" cy="6.9" r="3.1" fill="#def0fb" stroke="#6283a3" stroke-width="1.25"/><path d="M13.0,10.0 13.1,8.9 13.9,8.9 14.0,10.0 14.7,10.2 15.5,9.6 16.1,10.2 15.5,11.0 15.7,11.7 16.8,11.8 16.8,12.6 15.7,12.7 15.5,13.4 16.1,14.2 15.5,14.8 14.7,14.2 14.0,14.4 13.9,15.5 13.1,15.5 13.0,14.4 12.3,14.2 11.5,14.8 10.9,14.2 11.5,13.4 11.3,12.7 10.2,12.6 10.2,11.8 11.3,11.7 11.5,11.0 10.9,10.2 11.5,9.6 12.3,10.2Z" fill="#c3d9ec" stroke="#809fbb" stroke-width="0.7" stroke-linejoin="round"/><circle cx="13.5" cy="12.2" r="1" fill="#f0f7fc" stroke="#809fbb" stroke-width="0.5"/></svg>
<div class="t" style="left:360px;top:411.75px">Uygulama Katmanı Ağ Geçi...</div>
<div class="t" style="left:523px;top:411.75px">Internet B...</div>
<div class="t" style="left:664.5px;top:411.75px;letter-spacing:-0.4px">Elle</div>
<div class="t" style="left:766px;top:411.75px">Local Service</div>
<svg class="gear" style="left:340.5px;top:429.38px;" width="18" height="17" viewBox="0 0 18 17"><path d="M7.1,1.7 7.3,-0.0 8.5,-0.0 8.7,1.7 9.8,2.0 10.8,0.6 11.9,1.2 11.2,2.8 12.0,3.6 13.6,2.9 14.2,4.0 12.8,5.0 13.1,6.1 14.8,6.3 14.8,7.5 13.1,7.7 12.8,8.8 14.2,9.8 13.6,10.9 12.0,10.2 11.2,11.0 11.9,12.6 10.8,13.2 9.8,11.8 8.7,12.1 8.5,13.8 7.3,13.8 7.1,12.1 6.0,11.8 5.0,13.2 3.9,12.6 4.6,11.0 3.8,10.2 2.2,10.9 1.6,9.8 3.0,8.8 2.7,7.7 1.0,7.5 1.0,6.3 2.7,6.1 3.0,5.0 1.6,4.0 2.2,2.9 3.8,3.6 4.6,2.8 3.9,1.2 5.0,0.6 6.0,2.0Z" fill="#5d9fe2" stroke="#2f7fd2" stroke-width="0.8" stroke-linejoin="round"/><circle cx="7.9" cy="6.9" r="3.1" fill="#d4e7f8" stroke="#2b74c6" stroke-width="1.25"/><path d="M13.0,10.0 13.1,8.9 13.9,8.9 14.0,10.0 14.7,10.2 15.5,9.6 16.1,10.2 15.5,11.0 15.7,11.7 16.8,11.8 16.8,12.6 15.7,12.7 15.5,13.4 16.1,14.2 15.5,14.8 14.7,14.2 14.0,14.4 13.9,15.5 13.1,15.5 13.0,14.4 12.3,14.2 11.5,14.8 10.9,14.2 11.5,13.4 11.3,12.7 10.2,12.6 10.2,11.8 11.3,11.7 11.5,11.0 10.9,10.2 11.5,9.6 12.3,10.2Z" fill="#6aa6e3" stroke="#3a85d5" stroke-width="0.7" stroke-linejoin="round"/><circle cx="13.5" cy="12.2" r="1" fill="#e0eefa" stroke="#3a85d5" stroke-width="0.5"/></svg>
<div class="t sel" style="left:360px;top:430.68px">Uygulama Kimliği</div>
<div class="t sel" style="left:523px;top:430.68px">Bir uygula...</div>
<div class="t sel" style="left:664.5px;top:430.68px;letter-spacing:0.1px">Manuel (Tetikle...</div>
<div class="t sel" style="left:766px;top:430.68px">Local Service</div>
<svg class="gear" style="left:340.5px;top:448.31px;" width="18" height="17" viewBox="0 0 18 17"><path d="M7.1,1.7 7.3,-0.0 8.5,-0.0 8.7,1.7 9.8,2.0 10.8,0.6 11.9,1.2 11.2,2.8 12.0,3.6 13.6,2.9 14.2,4.0 12.8,5.0 13.1,6.1 14.8,6.3 14.8,7.5 13.1,7.7 12.8,8.8 14.2,9.8 13.6,10.9 12.0,10.2 11.2,11.0 11.9,12.6 10.8,13.2 9.8,11.8 8.7,12.1 8.5,13.8 7.3,13.8 7.1,12.1 6.0,11.8 5.0,13.2 3.9,12.6 4.6,11.0 3.8,10.2 2.2,10.9 1.6,9.8 3.0,8.8 2.7,7.7 1.0,7.5 1.0,6.3 2.7,6.1 3.0,5.0 1.6,4.0 2.2,2.9 3.8,3.6 4.6,2.8 3.9,1.2 5.0,0.6 6.0,2.0Z" fill="#bdd9f0" stroke="#829fbb" stroke-width="0.8" stroke-linejoin="round"/><circle cx="7.9" cy="6.9" r="3.1" fill="#def0fb" stroke="#6283a3" stroke-width="1.25"/><path d="M13.0,10.0 13.1,8.9 13.9,8.9 14.0,10.0 14.7,10.2 15.5,9.6 16.1,10.2 15.5,11.0 15.7,11.7 16.8,11.8 16.8,12.6 15.7,12.7 15.5,13.4 16.1,14.2 15.5,14.8 14.7,14.2 14.0,14.4 13.9,15.5 13.1,15.5 13.0,14.4 12.3,14.2 11.5,14.8 10.9,14.2 11.5,13.4 11.3,12.7 10.2,12.6 10.2,11.8 11.3,11.7 11.5,11.0 10.9,10.2 11.5,9.6 12.3,10.2Z" fill="#c3d9ec" stroke="#809fbb" stroke-width="0.7" stroke-linejoin="round"/><circle cx="13.5" cy="12.2" r="1" fill="#f0f7fc" stroke="#809fbb" stroke-width="0.5"/></svg>
<div class="t" style="left:360px;top:449.61px">Uzak Kayıt Defteri</div>
<div class="t" style="left:523px;top:449.61px">Uzak kulla...</div>
<div class="t" style="left:664.5px;top:449.61px">Devre Dışı</div>
<div class="t" style="left:766px;top:449.61px">Local Service</div>
<svg class="gear" style="left:340.5px;top:467.24px;" width="18" height="17" viewBox="0 0 18 17"><path d="M7.1,1.7 7.3,-0.0 8.5,-0.0 8.7,1.7 9.8,2.0 10.8,0.6 11.9,1.2 11.2,2.8 12.0,3.6 13.6,2.9 14.2,4.0 12.8,5.0 13.1,6.1 14.8,6.3 14.8,7.5 13.1,7.7 12.8,8.8 14.2,9.8 13.6,10.9 12.0,10.2 11.2,11.0 11.9,12.6 10.8,13.2 9.8,11.8 8.7,12.1 8.5,13.8 7.3,13.8 7.1,12.1 6.0,11.8 5.0,13.2 3.9,12.6 4.6,11.0 3.8,10.2 2.2,10.9 1.6,9.8 3.0,8.8 2.7,7.7 1.0,7.5 1.0,6.3 2.7,6.1 3.0,5.0 1.6,4.0 2.2,2.9 3.8,3.6 4.6,2.8 3.9,1.2 5.0,0.6 6.0,2.0Z" fill="#bdd9f0" stroke="#829fbb" stroke-width="0.8" stroke-linejoin="round"/><circle cx="7.9" cy="6.9" r="3.1" fill="#def0fb" stroke="#6283a3" stroke-width="1.25"/><path d="M13.0,10.0 13.1,8.9 13.9,8.9 14.0,10.0 14.7,10.2 15.5,9.6 16.1,10.2 15.5,11.0 15.7,11.7 16.8,11.8 16.8,12.6 15.7,12.7 15.5,13.4 16.1,14.2 15.5,14.8 14.7,14.2 14.0,14.4 13.9,15.5 13.1,15.5 13.0,14.4 12.3,14.2 11.5,14.8 10.9,14.2 11.5,13.4 11.3,12.7 10.2,12.6 10.2,11.8 11.3,11.7 11.5,11.0 10.9,10.2 11.5,9.6 12.3,10.2Z" fill="#c3d9ec" stroke="#809fbb" stroke-width="0.7" stroke-linejoin="round"/><circle cx="13.5" cy="12.2" r="1" fill="#f0f7fc" stroke="#809fbb" stroke-width="0.5"/></svg>
<div class="t" style="left:360px;top:468.54px">Uzak Masaüstü Hizmetleri</div>
<div class="t" style="left:523px;top:468.54px">Kullanıcıl...</div>
<div class="t" style="left:664.5px;top:468.54px;letter-spacing:-0.4px">Elle</div>
<div class="t" style="left:766px;top:468.54px;letter-spacing:0.05px">Network Service</div>
<svg class="gear" style="left:340.5px;top:486.17px;" width="18" height="17" viewBox="0 0 18 17"><path d="M7.1,1.7 7.3,-0.0 8.5,-0.0 8.7,1.7 9.8,2.0 10.8,0.6 11.9,1.2 11.2,2.8 12.0,3.6 13.6,2.9 14.2,4.0 12.8,5.0 13.1,6.1 14.8,6.3 14.8,7.5 13.1,7.7 12.8,8.8 14.2,9.8 13.6,10.9 12.0,10.2 11.2,11.0 11.9,12.6 10.8,13.2 9.8,11.8 8.7,12.1 8.5,13.8 7.3,13.8 7.1,12.1 6.0,11.8 5.0,13.2 3.9,12.6 4.6,11.0 3.8,10.2 2.2,10.9 1.6,9.8 3.0,8.8 2.7,7.7 1.0,7.5 1.0,6.3 2.7,6.1 3.0,5.0 1.6,4.0 2.2,2.9 3.8,3.6 4.6,2.8 3.9,1.2 5.0,0.6 6.0,2.0Z" fill="#bdd9f0" stroke="#829fbb" stroke-width="0.8" stroke-linejoin="round"/><circle cx="7.9" cy="6.9" r="3.1" fill="#def0fb" stroke="#6283a3" stroke-width="1.25"/><path d="M13.0,10.0 13.1,8.9 13.9,8.9 14.0,10.0 14.7,10.2 15.5,9.6 16.1,10.2 15.5,11.0 15.7,11.7 16.8,11.8 16.8,12.6 15.7,12.7 15.5,13.4 16.1,14.2 15.5,14.8 14.7,14.2 14.0,14.4 13.9,15.5 13.1,15.5 13.0,14.4 12.3,14.2 11.5,14.8 10.9,14.2 11.5,13.4 11.3,12.7 10.2,12.6 10.2,11.8 11.3,11.7 11.5,11.0 10.9,10.2 11.5,9.6 12.3,10.2Z" fill="#c3d9ec" stroke="#809fbb" stroke-width="0.7" stroke-linejoin="round"/><circle cx="13.5" cy="12.2" r="1" fill="#f0f7fc" stroke="#809fbb" stroke-width="0.5"/></svg>
<div class="t" style="left:360px;top:487.47px">Uzak Masaüstü Hizmetleri K...</div>
<div class="t" style="left:523px;top:487.47px">Uzak Mas...</div>
<div class="t" style="left:664.5px;top:487.47px;letter-spacing:-0.4px">Elle</div>
<div class="t" style="left:766px;top:487.47px;letter-spacing:-0.1px">Local System</div>
<svg class="gear" style="left:340.5px;top:505.10px;" width="18" height="17" viewBox="0 0 18 17"><path d="M7.1,1.7 7.3,-0.0 8.5,-0.0 8.7,1.7 9.8,2.0 10.8,0.6 11.9,1.2 11.2,2.8 12.0,3.6 13.6,2.9 14.2,4.0 12.8,5.0 13.1,6.1 14.8,6.3 14.8,7.5 13.1,7.7 12.8,8.8 14.2,9.8 13.6,10.9 12.0,10.2 11.2,11.0 11.9,12.6 10.8,13.2 9.8,11.8 8.7,12.1 8.5,13.8 7.3,13.8 7.1,12.1 6.0,11.8 5.0,13.2 3.9,12.6 4.6,11.0 3.8,10.2 2.2,10.9 1.6,9.8 3.0,8.8 2.7,7.7 1.0,7.5 1.0,6.3 2.7,6.1 3.0,5.0 1.6,4.0 2.2,2.9 3.8,3.6 4.6,2.8 3.9,1.2 5.0,0.6 6.0,2.0Z" fill="#bdd9f0" stroke="#829fbb" stroke-width="0.8" stroke-linejoin="round"/><circle cx="7.9" cy="6.9" r="3.1" fill="#def0fb" stroke="#6283a3" stroke-width="1.25"/><path d="M13.0,10.0 13.1,8.9 13.9,8.9 14.0,10.0 14.7,10.2 15.5,9.6 16.1,10.2 15.5,11.0 15.7,11.7 16.8,11.8 16.8,12.6 15.7,12.7 15.5,13.4 16.1,14.2 15.5,14.8 14.7,14.2 14.0,14.4 13.9,15.5 13.1,15.5 13.0,14.4 12.3,14.2 11.5,14.8 10.9,14.2 11.5,13.4 11.3,12.7 10.2,12.6 10.2,11.8 11.3,11.7 11.5,11.0 10.9,10.2 11.5,9.6 12.3,10.2Z" fill="#c3d9ec" stroke="#809fbb" stroke-width="0.7" stroke-linejoin="round"/><circle cx="13.5" cy="12.2" r="1" fill="#f0f7fc" stroke="#809fbb" stroke-width="0.5"/></svg>
<div class="t" style="left:360px;top:506.40px">Uzak Masaüstü Yapılandırm...</div>
<div class="t" style="left:523px;top:506.40px">Uzak Mas...</div>
<div class="t" style="left:664.5px;top:506.40px;letter-spacing:-0.4px">Elle</div>
<div class="t" style="left:766px;top:506.40px;letter-spacing:-0.1px">Local System</div>
<svg class="gear" style="left:340.5px;top:524.03px;" width="18" height="17" viewBox="0 0 18 17"><path d="M7.1,1.7 7.3,-0.0 8.5,-0.0 8.7,1.7 9.8,2.0 10.8,0.6 11.9,1.2 11.2,2.8 12.0,3.6 13.6,2.9 14.2,4.0 12.8,5.0 13.1,6.1 14.8,6.3 14.8,7.5 13.1,7.7 12.8,8.8 14.2,9.8 13.6,10.9 12.0,10.2 11.2,11.0 11.9,12.6 10.8,13.2 9.8,11.8 8.7,12.1 8.5,13.8 7.3,13.8 7.1,12.1 6.0,11.8 5.0,13.2 3.9,12.6 4.6,11.0 3.8,10.2 2.2,10.9 1.6,9.8 3.0,8.8 2.7,7.7 1.0,7.5 1.0,6.3 2.7,6.1 3.0,5.0 1.6,4.0 2.2,2.9 3.8,3.6 4.6,2.8 3.9,1.2 5.0,0.6 6.0,2.0Z" fill="#bdd9f0" stroke="#829fbb" stroke-width="0.8" stroke-linejoin="round"/><circle cx="7.9" cy="6.9" r="3.1" fill="#def0fb" stroke="#6283a3" stroke-width="1.25"/><path d="M13.0,10.0 13.1,8.9 13.9,8.9 14.0,10.0 14.7,10.2 15.5,9.6 16.1,10.2 15.5,11.0 15.7,11.7 16.8,11.8 16.8,12.6 15.7,12.7 15.5,13.4 16.1,14.2 15.5,14.8 14.7,14.2 14.0,14.4 13.9,15.5 13.1,15.5 13.0,14.4 12.3,14.2 11.5,14.8 10.9,14.2 11.5,13.4 11.3,12.7 10.2,12.6 10.2,11.8 11.3,11.7 11.5,11.0 10.9,10.2 11.5,9.6 12.3,10.2Z" fill="#c3d9ec" stroke="#809fbb" stroke-width="0.7" stroke-linejoin="round"/><circle cx="13.5" cy="12.2" r="1" fill="#f0f7fc" stroke="#809fbb" stroke-width="0.5"/></svg>
<div class="t" style="left:360px;top:525.33px">Uzaktan Erişim Bağlantı Yö...</div>
<div class="t" style="left:523px;top:525.33px">Bu bilgisa...</div>
<div class="t" style="left:597px;top:525.33px">Çalışıyor</div>
<div class="t" style="left:664.5px;top:525.33px;letter-spacing:0.35px">Otomatik</div>
<div class="t" style="left:766px;top:525.33px;letter-spacing:-0.1px">Local System</div>
<svg class="gear" style="left:340.5px;top:542.96px;" width="18" height="17" viewBox="0 0 18 17"><path d="M7.1,1.7 7.3,-0.0 8.5,-0.0 8.7,1.7 9.8,2.0 10.8,0.6 11.9,1.2 11.2,2.8 12.0,3.6 13.6,2.9 14.2,4.0 12.8,5.0 13.1,6.1 14.8,6.3 14.8,7.5 13.1,7.7 12.8,8.8 14.2,9.8 13.6,10.9 12.0,10.2 11.2,11.0 11.9,12.6 10.8,13.2 9.8,11.8 8.7,12.1 8.5,13.8 7.3,13.8 7.1,12.1 6.0,11.8 5.0,13.2 3.9,12.6 4.6,11.0 3.8,10.2 2.2,10.9 1.6,9.8 3.0,8.8 2.7,7.7 1.0,7.5 1.0,6.3 2.7,6.1 3.0,5.0 1.6,4.0 2.2,2.9 3.8,3.6 4.6,2.8 3.9,1.2 5.0,0.6 6.0,2.0Z" fill="#bdd9f0" stroke="#829fbb" stroke-width="0.8" stroke-linejoin="round"/><circle cx="7.9" cy="6.9" r="3.1" fill="#def0fb" stroke="#6283a3" stroke-width="1.25"/><path d="M13.0,10.0 13.1,8.9 13.9,8.9 14.0,10.0 14.7,10.2 15.5,9.6 16.1,10.2 15.5,11.0 15.7,11.7 16.8,11.8 16.8,12.6 15.7,12.7 15.5,13.4 16.1,14.2 15.5,14.8 14.7,14.2 14.0,14.4 13.9,15.5 13.1,15.5 13.0,14.4 12.3,14.2 11.5,14.8 10.9,14.2 11.5,13.4 11.3,12.7 10.2,12.6 10.2,11.8 11.3,11.7 11.5,11.0 10.9,10.2 11.5,9.6 12.3,10.2Z" fill="#c3d9ec" stroke="#809fbb" stroke-width="0.7" stroke-linejoin="round"/><circle cx="13.5" cy="12.2" r="1" fill="#f0f7fc" stroke="#809fbb" stroke-width="0.5"/></svg>
<div class="t" style="left:360px;top:544.26px">Uzaktan Erişim Otomatik Ba...</div>
<div class="t" style="left:523px;top:544.26px">Bir progra...</div>
<div class="t" style="left:664.5px;top:544.26px;letter-spacing:-0.4px">Elle</div>
<div class="t" style="left:766px;top:544.26px;letter-spacing:-0.1px">Local System</div>
<svg class="gear" style="left:340.5px;top:561.89px;" width="18" height="17" viewBox="0 0 18 17"><path d="M7.1,1.7 7.3,-0.0 8.5,-0.0 8.7,1.7 9.8,2.0 10.8,0.6 11.9,1.2 11.2,2.8 12.0,3.6 13.6,2.9 14.2,4.0 12.8,5.0 13.1,6.1 14.8,6.3 14.8,7.5 13.1,7.7 12.8,8.8 14.2,9.8 13.6,10.9 12.0,10.2 11.2,11.0 11.9,12.6 10.8,13.2 9.8,11.8 8.7,12.1 8.5,13.8 7.3,13.8 7.1,12.1 6.0,11.8 5.0,13.2 3.9,12.6 4.6,11.0 3.8,10.2 2.2,10.9 1.6,9.8 3.0,8.8 2.7,7.7 1.0,7.5 1.0,6.3 2.7,6.1 3.0,5.0 1.6,4.0 2.2,2.9 3.8,3.6 4.6,2.8 3.9,1.2 5.0,0.6 6.0,2.0Z" fill="#bdd9f0" stroke="#829fbb" stroke-width="0.8" stroke-linejoin="round"/><circle cx="7.9" cy="6.9" r="3.1" fill="#def0fb" stroke="#6283a3" stroke-width="1.25"/><path d="M13.0,10.0 13.1,8.9 13.9,8.9 14.0,10.0 14.7,10.2 15.5,9.6 16.1,10.2 15.5,11.0 15.7,11.7 16.8,11.8 16.8,12.6 15.7,12.7 15.5,13.4 16.1,14.2 15.5,14.8 14.7,14.2 14.0,14.4 13.9,15.5 13.1,15.5 13.0,14.4 12.3,14.2 11.5,14.8 10.9,14.2 11.5,13.4 11.3,12.7 10.2,12.6 10.2,11.8 11.3,11.7 11.5,11.0 10.9,10.2 11.5,9.6 12.3,10.2Z" fill="#c3d9ec" stroke="#809fbb" stroke-width="0.7" stroke-linejoin="round"/><circle cx="13.5" cy="12.2" r="1" fill="#f0f7fc" stroke="#809fbb" stroke-width="0.5"/></svg>
<div class="t" style="left:360px;top:563.19px">Uzaktan Yordam Çağrısı (RPC)</div>
<div class="t" style="left:523px;top:563.19px;letter-spacing:-0.55px">RPCSS hiz...</div>
<div class="t" style="left:597px;top:563.19px">Çalışıyor</div>
<div class="t" style="left:664.5px;top:563.19px;letter-spacing:0.35px">Otomatik</div>
<div class="t" style="left:766px;top:563.19px;letter-spacing:0.05px">Network Service</div>
<svg class="gear" style="left:340.5px;top:580.82px;" width="18" height="17" viewBox="0 0 18 17"><path d="M7.1,1.7 7.3,-0.0 8.5,-0.0 8.7,1.7 9.8,2.0 10.8,0.6 11.9,1.2 11.2,2.8 12.0,3.6 13.6,2.9 14.2,4.0 12.8,5.0 13.1,6.1 14.8,6.3 14.8,7.5 13.1,7.7 12.8,8.8 14.2,9.8 13.6,10.9 12.0,10.2 11.2,11.0 11.9,12.6 10.8,13.2 9.8,11.8 8.7,12.1 8.5,13.8 7.3,13.8 7.1,12.1 6.0,11.8 5.0,13.2 3.9,12.6 4.6,11.0 3.8,10.2 2.2,10.9 1.6,9.8 3.0,8.8 2.7,7.7 1.0,7.5 1.0,6.3 2.7,6.1 3.0,5.0 1.6,4.0 2.2,2.9 3.8,3.6 4.6,2.8 3.9,1.2 5.0,0.6 6.0,2.0Z" fill="#bdd9f0" stroke="#829fbb" stroke-width="0.8" stroke-linejoin="round"/><circle cx="7.9" cy="6.9" r="3.1" fill="#def0fb" stroke="#6283a3" stroke-width="1.25"/><path d="M13.0,10.0 13.1,8.9 13.9,8.9 14.0,10.0 14.7,10.2 15.5,9.6 16.1,10.2 15.5,11.0 15.7,11.7 16.8,11.8 16.8,12.6 15.7,12.7 15.5,13.4 16.1,14.2 15.5,14.8 14.7,14.2 14.0,14.4 13.9,15.5 13.1,15.5 13.0,14.4 12.3,14.2 11.5,14.8 10.9,14.2 11.5,13.4 11.3,12.7 10.2,12.6 10.2,11.8 11.3,11.7 11.5,11.0 10.9,10.2 11.5,9.6 12.3,10.2Z" fill="#c3d9ec" stroke="#809fbb" stroke-width="0.7" stroke-linejoin="round"/><circle cx="13.5" cy="12.2" r="1" fill="#f0f7fc" stroke="#809fbb" stroke-width="0.5"/></svg>
<div class="t" style="left:360px;top:582.12px">Uzaktan Yordam Çağrısı (RP...</div>
<div class="t" style="left:523px;top:582.12px">Windows ...</div>
<div class="t" style="left:664.5px;top:582.12px;letter-spacing:-0.4px">Elle</div>
<div class="t" style="left:766px;top:582.12px;letter-spacing:0.05px">Network Service</div>
<svg class="gear" style="left:340.5px;top:599.75px;" width="18" height="17" viewBox="0 0 18 17"><path d="M7.1,1.7 7.3,-0.0 8.5,-0.0 8.7,1.7 9.8,2.0 10.8,0.6 11.9,1.2 11.2,2.8 12.0,3.6 13.6,2.9 14.2,4.0 12.8,5.0 13.1,6.1 14.8,6.3 14.8,7.5 13.1,7.7 12.8,8.8 14.2,9.8 13.6,10.9 12.0,10.2 11.2,11.0 11.9,12.6 10.8,13.2 9.8,11.8 8.7,12.1 8.5,13.8 7.3,13.8 7.1,12.1 6.0,11.8 5.0,13.2 3.9,12.6 4.6,11.0 3.8,10.2 2.2,10.9 1.6,9.8 3.0,8.8 2.7,7.7 1.0,7.5 1.0,6.3 2.7,6.1 3.0,5.0 1.6,4.0 2.2,2.9 3.8,3.6 4.6,2.8 3.9,1.2 5.0,0.6 6.0,2.0Z" fill="#bdd9f0" stroke="#829fbb" stroke-width="0.8" stroke-linejoin="round"/><circle cx="7.9" cy="6.9" r="3.1" fill="#def0fb" stroke="#6283a3" stroke-width="1.25"/><path d="M13.0,10.0 13.1,8.9 13.9,8.9 14.0,10.0 14.7,10.2 15.5,9.6 16.1,10.2 15.5,11.0 15.7,11.7 16.8,11.8 16.8,12.6 15.7,12.7 15.5,13.4 16.1,14.2 15.5,14.8 14.7,14.2 14.0,14.4 13.9,15.5 13.1,15.5 13.0,14.4 12.3,14.2 11.5,14.8 10.9,14.2 11.5,13.4 11.3,12.7 10.2,12.6 10.2,11.8 11.3,11.7 11.5,11.0 10.9,10.2 11.5,9.6 12.3,10.2Z" fill="#c3d9ec" stroke="#809fbb" stroke-width="0.7" stroke-linejoin="round"/><circle cx="13.5" cy="12.2" r="1" fill="#f0f7fc" stroke="#809fbb" stroke-width="0.5"/></svg>
<div class="t" style="left:360px;top:601.05px">Uzamsal Veri Hizmeti</div>
<div class="t" style="left:523px;top:601.05px">Bu hizmet...</div>
<div class="t" style="left:664.5px;top:601.05px;letter-spacing:-0.4px">Elle</div>
<div class="t" style="left:766px;top:601.05px">Local Service</div>
<svg class="gear" style="left:340.5px;top:618.68px;" width="18" height="17" viewBox="0 0 18 17"><path d="M7.1,1.7 7.3,-0.0 8.5,-0.0 8.7,1.7 9.8,2.0 10.8,0.6 11.9,1.2 11.2,2.8 12.0,3.6 13.6,2.9 14.2,4.0 12.8,5.0 13.1,6.1 14.8,6.3 14.8,7.5 13.1,7.7 12.8,8.8 14.2,9.8 13.6,10.9 12.0,10.2 11.2,11.0 11.9,12.6 10.8,13.2 9.8,11.8 8.7,12.1 8.5,13.8 7.3,13.8 7.1,12.1 6.0,11.8 5.0,13.2 3.9,12.6 4.6,11.0 3.8,10.2 2.2,10.9 1.6,9.8 3.0,8.8 2.7,7.7 1.0,7.5 1.0,6.3 2.7,6.1 3.0,5.0 1.6,4.0 2.2,2.9 3.8,3.6 4.6,2.8 3.9,1.2 5.0,0.6 6.0,2.0Z" fill="#bdd9f0" stroke="#829fbb" stroke-width="0.8" stroke-linejoin="round"/><circle cx="7.9" cy="6.9" r="3.1" fill="#def0fb" stroke="#6283a3" stroke-width="1.25"/><path d="M13.0,10.0 13.1,8.9 13.9,8.9 14.0,10.0 14.7,10.2 15.5,9.6 16.1,10.2 15.5,11.0 15.7,11.7 16.8,11.8 16.8,12.6 15.7,12.7 15.5,13.4 16.1,14.2 15.5,14.8 14.7,14.2 14.0,14.4 13.9,15.5 13.1,15.5 13.0,14.4 12.3,14.2 11.5,14.8 10.9,14.2 11.5,13.4 11.3,12.7 10.2,12.6 10.2,11.8 11.3,11.7 11.5,11.0 10.9,10.2 11.5,9.6 12.3,10.2Z" fill="#c3d9ec" stroke="#809fbb" stroke-width="0.7" stroke-linejoin="round"/><circle cx="13.5" cy="12.2" r="1" fill="#f0f7fc" stroke="#809fbb" stroke-width="0.5"/></svg>
<div class="t" style="left:360px;top:619.98px">Veri Kullanımı</div>
<div class="t" style="left:523px;top:619.98px">Ağ veri ku...</div>
<div class="t" style="left:597px;top:619.98px">Çalışıyor</div>
<div class="t" style="left:664.5px;top:619.98px;letter-spacing:0.35px">Otomatik</div>
<div class="t" style="left:766px;top:619.98px">Local Service</div>
<svg class="gear" style="left:340.5px;top:637.61px;" width="18" height="17" viewBox="0 0 18 17"><path d="M7.1,1.7 7.3,-0.0 8.5,-0.0 8.7,1.7 9.8,2.0 10.8,0.6 11.9,1.2 11.2,2.8 12.0,3.6 13.6,2.9 14.2,4.0 12.8,5.0 13.1,6.1 14.8,6.3 14.8,7.5 13.1,7.7 12.8,8.8 14.2,9.8 13.6,10.9 12.0,10.2 11.2,11.0 11.9,12.6 10.8,13.2 9.8,11.8 8.7,12.1 8.5,13.8 7.3,13.8 7.1,12.1 6.0,11.8 5.0,13.2 3.9,12.6 4.6,11.0 3.8,10.2 2.2,10.9 1.6,9.8 3.0,8.8 2.7,7.7 1.0,7.5 1.0,6.3 2.7,6.1 3.0,5.0 1.6,4.0 2.2,2.9 3.8,3.6 4.6,2.8 3.9,1.2 5.0,0.6 6.0,2.0Z" fill="#bdd9f0" stroke="#829fbb" stroke-width="0.8" stroke-linejoin="round"/><circle cx="7.9" cy="6.9" r="3.1" fill="#def0fb" stroke="#6283a3" stroke-width="1.25"/><path d="M13.0,10.0 13.1,8.9 13.9,8.9 14.0,10.0 14.7,10.2 15.5,9.6 16.1,10.2 15.5,11.0 15.7,11.7 16.8,11.8 16.8,12.6 15.7,12.7 15.5,13.4 16.1,14.2 15.5,14.8 14.7,14.2 14.0,14.4 13.9,15.5 13.1,15.5 13.0,14.4 12.3,14.2 11.5,14.8 10.9,14.2 11.5,13.4 11.3,12.7 10.2,12.6 10.2,11.8 11.3,11.7 11.5,11.0 10.9,10.2 11.5,9.6 12.3,10.2Z" fill="#c3d9ec" stroke="#809fbb" stroke-width="0.7" stroke-linejoin="round"/><circle cx="13.5" cy="12.2" r="1" fill="#f0f7fc" stroke="#809fbb" stroke-width="0.5"/></svg>
<div class="t" style="left:360px;top:638.91px">Veri Paylaşım Hizmeti</div>
<div class="t" style="left:523px;top:638.91px">Uygulam...</div>
<div class="t" style="left:597px;top:638.91px">Çalışıyor</div>
<div class="t" style="left:664.5px;top:638.91px;letter-spacing:0.1px">Manuel (Tetikle...</div>
<div class="t" style="left:766px;top:638.91px;letter-spacing:-0.1px">Local System</div>
<svg class="gear" style="left:340.5px;top:656.54px;" width="18" height="17" viewBox="0 0 18 17"><path d="M7.1,1.7 7.3,-0.0 8.5,-0.0 8.7,1.7 9.8,2.0 10.8,0.6 11.9,1.2 11.2,2.8 12.0,3.6 13.6,2.9 14.2,4.0 12.8,5.0 13.1,6.1 14.8,6.3 14.8,7.5 13.1,7.7 12.8,8.8 14.2,9.8 13.6,10.9 12.0,10.2 11.2,11.0 11.9,12.6 10.8,13.2 9.8,11.8 8.7,12.1 8.5,13.8 7.3,13.8 7.1,12.1 6.0,11.8 5.0,13.2 3.9,12.6 4.6,11.0 3.8,10.2 2.2,10.9 1.6,9.8 3.0,8.8 2.7,7.7 1.0,7.5 1.0,6.3 2.7,6.1 3.0,5.0 1.6,4.0 2.2,2.9 3.8,3.6 4.6,2.8 3.9,1.2 5.0,0.6 6.0,2.0Z" fill="#bdd9f0" stroke="#829fbb" stroke-width="0.8" stroke-linejoin="round"/><circle cx="7.9" cy="6.9" r="3.1" fill="#def0fb" stroke="#6283a3" stroke-width="1.25"/><path d="M13.0,10.0 13.1,8.9 13.9,8.9 14.0,10.0 14.7,10.2 15.5,9.6 16.1,10.2 15.5,11.0 15.7,11.7 16.8,11.8 16.8,12.6 15.7,12.7 15.5,13.4 16.1,14.2 15.5,14.8 14.7,14.2 14.0,14.4 13.9,15.5 13.1,15.5 13.0,14.4 12.3,14.2 11.5,14.8 10.9,14.2 11.5,13.4 11.3,12.7 10.2,12.6 10.2,11.8 11.3,11.7 11.5,11.0 10.9,10.2 11.5,9.6 12.3,10.2Z" fill="#c3d9ec" stroke="#809fbb" stroke-width="0.7" stroke-linejoin="round"/><circle cx="13.5" cy="12.2" r="1" fill="#f0f7fc" stroke="#809fbb" stroke-width="0.5"/></svg>
<div class="t" style="left:360px;top:657.84px">Volumetrik Ses Oluşturucu H...</div>
<div class="t" style="left:523px;top:657.84px">Karma ge...</div>
<div class="t" style="left:664.5px;top:657.84px;letter-spacing:-0.4px">Elle</div>
<div class="t" style="left:766px;top:657.84px">Local Service</div>
<div class="a" style="left:407.8px;top:436.4px;width:164.8px;height:230.4px;background:#f0f0f0;border:1px solid #dadada;box-shadow:2.2px 2.2px 1.6px rgba(0,0,0,.45)"></div>
<div class="a" style="left:410.4px;top:439.3px;width:159.6px;height:21.3px;background:#91c9f7"></div>
<div class="mi" style="top:442.6px;">Başlat</div>
<div class="mi dis" style="top:464.5px;">Durdur</div>
<div class="mi dis" style="top:486.3px;">Duraklat</div>
<div class="mi dis" style="top:508.1px;">Devam Et</div>
<div class="mi dis" style="top:530.1px;">Yeniden Başlat</div>
<div class="mi" style="top:559.1px;">Tüm Görevler</div>
<div class="mi" style="top:588.0px;">Yenile</div>
<div class="mi" style="top:616.9px;font-weight:bold;">Özellikler</div>
<div class="mi" style="top:645.6px;">Yardım</div>
<div class="sep" style="top:552.1px"></div>
<div class="sep" style="top:580.8px"></div>
<div class="sep" style="top:609.7px"></div>
<div class="sep" style="top:638.4px"></div>
<svg class="a" style="left:555px;top:561.5px" width="6" height="9" viewBox="0 0 6 9"><path d="M1.2,0.8 L4.8,4.5 L1.2,8.2" fill="none" stroke="#333" stroke-width="1"/></svg>
</body></html>
